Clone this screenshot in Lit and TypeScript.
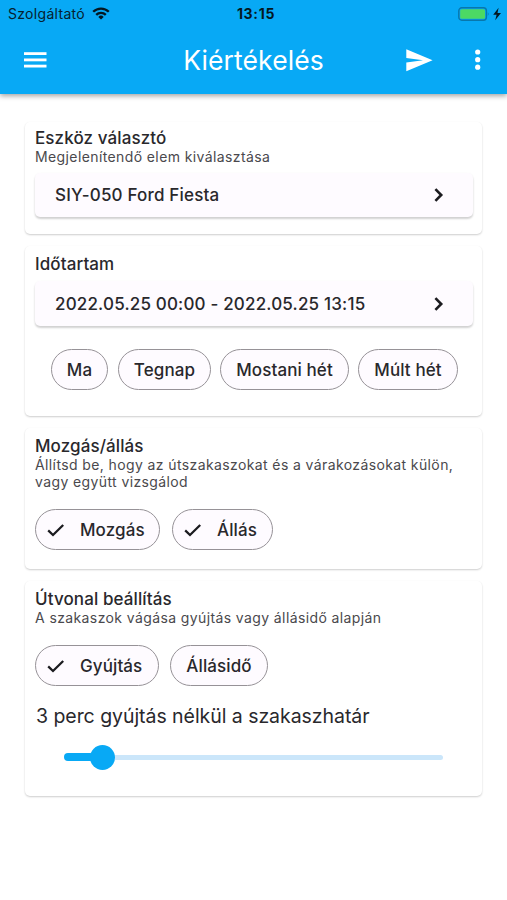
import { LitElement, html, css, svg } from "lit";
import { customElement, property } from "lit/decorators.js";

const chevron = html`<svg class="chev" viewBox="0 0 12 16" width="12" height="16">
  <path d="M2.4 2.2 L8.2 8 L2.4 13.8" fill="none" stroke="#1b1b1f" stroke-width="2.6" />
</svg>`;

const check = svg`<path d="M1.2 7.4 L6 12 L16.2 2" fill="none" stroke="#1b1b1f" stroke-width="2.3" />`;

@customElement("pick-row")
class PickRow extends LitElement {
  static styles = css`
    :host {
      display: flex;
      align-items: center;
      justify-content: space-between;
      box-sizing: border-box;
      height: 44px;
      padding: 0 28px 0 20px;
      border-radius: 5px;
      background: #fefbff;
      box-shadow: 0 2px 2px rgba(0, 0, 0, 0.15), 0 1px 3px rgba(0, 0, 0, 0.06);
      font-size: 17px;
      font-weight: 450;
      letter-spacing: 0.18px;
      color: #29282c;
    }
    .chev {
      display: block;
    }
  `;
  render() {
    return html`<slot></slot>${chevron}`;
  }
}

@customElement("choice-chip")
class ChoiceChip extends LitElement {
  @property({ type: Boolean, reflect: true }) checked = false;
  static styles = css`
    :host {
      display: flex;
      align-items: center;
      justify-content: center;
      box-sizing: border-box;
      height: 41px;
      border: 1px solid #969297;
      border-radius: 21px;
      background: #fefbff;
      font-size: 17px;
      font-weight: 450;
      letter-spacing: 0.1px;
      color: #29282c;
      white-space: nowrap;
    }
    :host([checked]) {
      justify-content: flex-start;
      padding-left: 11px;
    }
    .check {
      display: block;
      margin-right: 15px;
    }
  `;
  render() {
    return html`${this.checked
        ? html`<svg class="check" viewBox="0 0 18 14" width="18" height="14">${check}</svg>`
        : ""}<slot></slot>`;
  }
}

@customElement("app-root")
class AppRoot extends LitElement {
  static styles = css`
    :host {
      display: block;
      height: 900px;
      overflow: hidden;
      background: #fff;
      font-family: Inter, "Liberation Sans", sans-serif;
      color: #29282c;
    }
    header {
      height: 94px;
      background: #08a9f5;
      box-shadow: 0 2px 5px rgba(0, 0, 0, 0.36);
    }
    .status {
      display: grid;
      grid-template-columns: 1fr auto 1fr;
      align-items: center;
      height: 27px;
      padding: 0 5px 0 8px;
      color: #06212f;
      font-size: 14px;
    }
    .carrier {
      display: flex;
      align-items: center;
      gap: 7px;
      letter-spacing: 0.3px;
    }
    .clock {
      font-weight: 700;
      letter-spacing: 0.7px;
      padding-left: 2px;
      color: #041822;
    }
    .power {
      display: flex;
      justify-content: flex-end;
    }
    .bar {
      display: grid;
      grid-template-columns: 1fr auto 1fr;
      align-items: center;
      height: 66px;
      padding: 0 24px 0 24px;
      color: #fff;
    }
    .bar svg,
    .status svg {
      display: block;
    }
    h1 {
      margin: 0;
      font-size: 26.5px;
      font-weight: 400;
      letter-spacing: 0.1px;
    }
    .actions {
      display: flex;
      justify-content: flex-end;
      align-items: center;
      gap: 42px;
    }
    main {
      display: flex;
      flex-direction: column;
      gap: 12px;
      padding: 28px 25px 0;
    }
    section {
      box-sizing: border-box;
      padding: 6px 9px 0 10px;
      border-radius: 5px;
      background: #fff;
      box-shadow: 0 1px 2px rgba(0, 0, 0, 0.2);
    }
    .device {
      height: 112px;
    }
    .period {
      height: 170px;
      padding-top: 8px;
    }
    .motion {
      height: 141px;
      padding-top: 8px;
    }
    .route {
      height: 215px;
      padding-top: 8px;
    }
    h2 {
      margin: 0;
      font-size: 17px;
      line-height: 20px;
      font-weight: 450;
      letter-spacing: 0.1px;
    }
    p {
      margin: 0;
      font-size: 14px;
      line-height: 17px;
      color: #4a494d;
      letter-spacing: 0.39px;
      white-space: nowrap;
    }
    .device pick-row {
      margin-top: 8px;
    }
    .period pick-row {
      margin-top: 7px;
      height: 45px;
    }
    .chips {
      display: flex;
      margin-top: 19px;
    }
    .quick {
      gap: 9px;
      margin: 23px 0 0 16px;
    }
    .today { width: 57px; margin-right: 1px; }
    .yesterday { width: 93px; }
    .this-week { width: 129px; }
    .last-week { width: 100px; }
    .moving { width: 125px; margin-right: 12px; }
    .standing { width: 101px; }
    .ignition { width: 124px; margin-right: 11px; }
    .idle { width: 98px; }
    .limit {
      margin-top: 18px;
      padding-left: 1px;
      font-size: 19.5px;
      line-height: 25px;
      letter-spacing: -0.05px;
    }
    .slider {
      display: flex;
      align-items: center;
      height: 26px;
      margin: 15px 30px 0 29px;
    }
    .done {
      width: 30px;
      height: 8px;
      border-radius: 4px;
      background: #08a9f5;
    }
    .thumb {
      width: 25px;
      height: 25px;
      margin-left: -4px;
      border-radius: 50%;
      background: #08a9f5;
    }
    .rest {
      flex: 1;
      height: 5px;
      border-radius: 0 3px 3px 0;
      background: #cbe6fa;
    }
  `;

  render() {
    return html`
      <header>
        <div class="status">
          <div class="carrier">
            <span>Szolgáltató</span>
            <svg width="18" height="13" viewBox="0 0 18 13" fill="none" stroke="#041822" stroke-width="2.3">
              <path d="M1.2 4.8 A11 11 0 0 1 16.8 4.8" />
              <path d="M4.2 7.9 A6.8 6.8 0 0 1 13.8 7.9" />
              <path d="M9 12.6 L6.3 9.9 A3.8 3.8 0 0 1 11.7 9.9 Z" fill="#041822" stroke="none" />
            </svg>
          </div>
          <div class="clock">13:15</div>
          <div class="power">
            <svg width="44" height="14" viewBox="0 0 44 14">
              <rect x="0.8" y="0.8" width="27.6" height="12.4" rx="3" fill="none" stroke="#0877ac" stroke-width="1.4" />
              <rect x="2.2" y="2.2" width="24.8" height="9.6" rx="1.6" fill="#4cd964" />
              <path d="M29.8 5 Q31.6 7 29.8 9 Z" fill="#0877ac" />
              <path d="M40.6 0.8 L35.2 7.8 H38.6 L37.2 13.2 L43 6 H39.5 Z" fill="#041822" />
            </svg>
          </div>
        </div>
        <div class="bar">
          <svg width="23" height="16" viewBox="0 0 23 16" fill="#fff">
            <rect y="0.2" width="22.5" height="2.8" />
            <rect y="6.5" width="22.5" height="2.8" />
            <rect y="12.7" width="22.5" height="2.8" />
          </svg>
          <h1>Kiértékelés</h1>
          <div class="actions">
            <svg width="27" height="23" viewBox="0 0 27 23" fill="#fff">
              <path d="M0.3 0.3 L26.6 11.2 L0.3 22.3 V13.4 L17 11.2 L0.3 9 Z" />
            </svg>
            <svg width="8" height="22" viewBox="0 0 8 22" fill="#fff">
              <circle cx="2.7" cy="3" r="2.6" /><circle cx="2.7" cy="10.7" r="2.6" /><circle cx="2.7" cy="18.2" r="2.6" />
            </svg>
          </div>
        </div>
      </header>
      <main>
        <section class="device">
          <h2>Eszköz választó</h2>
          <p>Megjelenítendő elem kiválasztása</p>
          <pick-row>SIY-050 Ford Fiesta</pick-row>
        </section>
        <section class="period">
          <h2>Időtartam</h2>
          <pick-row>2022.05.25 00:00 - 2022.05.25 13:15</pick-row>
          <div class="chips quick">
            <choice-chip class="today">Ma</choice-chip>
            <choice-chip class="yesterday">Tegnap</choice-chip>
            <choice-chip class="this-week">Mostani hét</choice-chip>
            <choice-chip class="last-week">Múlt hét</choice-chip>
          </div>
        </section>
        <section class="motion">
          <h2>Mozgás/állás</h2>
          <p>Állítsd be, hogy az útszakaszokat és a várakozásokat külön,<br />vagy együtt vizsgálod</p>
          <div class="chips">
            <choice-chip class="moving" checked>Mozgás</choice-chip>
            <choice-chip class="standing" checked>Állás</choice-chip>
          </div>
        </section>
        <section class="route">
          <h2>Útvonal beállítás</h2>
          <p>A szakaszok vágása gyújtás vagy állásidő alapján</p>
          <div class="chips">
            <choice-chip class="ignition" checked>Gyújtás</choice-chip>
            <choice-chip class="idle">Állásidő</choice-chip>
          </div>
          <div class="limit">3 perc gyújtás nélkül a szakaszhatár</div>
          <div class="slider">
            <div class="done"></div>
            <div class="thumb"></div>
            <div class="rest"></div>
          </div>
        </section>
      </main>
    `;
  }
}
